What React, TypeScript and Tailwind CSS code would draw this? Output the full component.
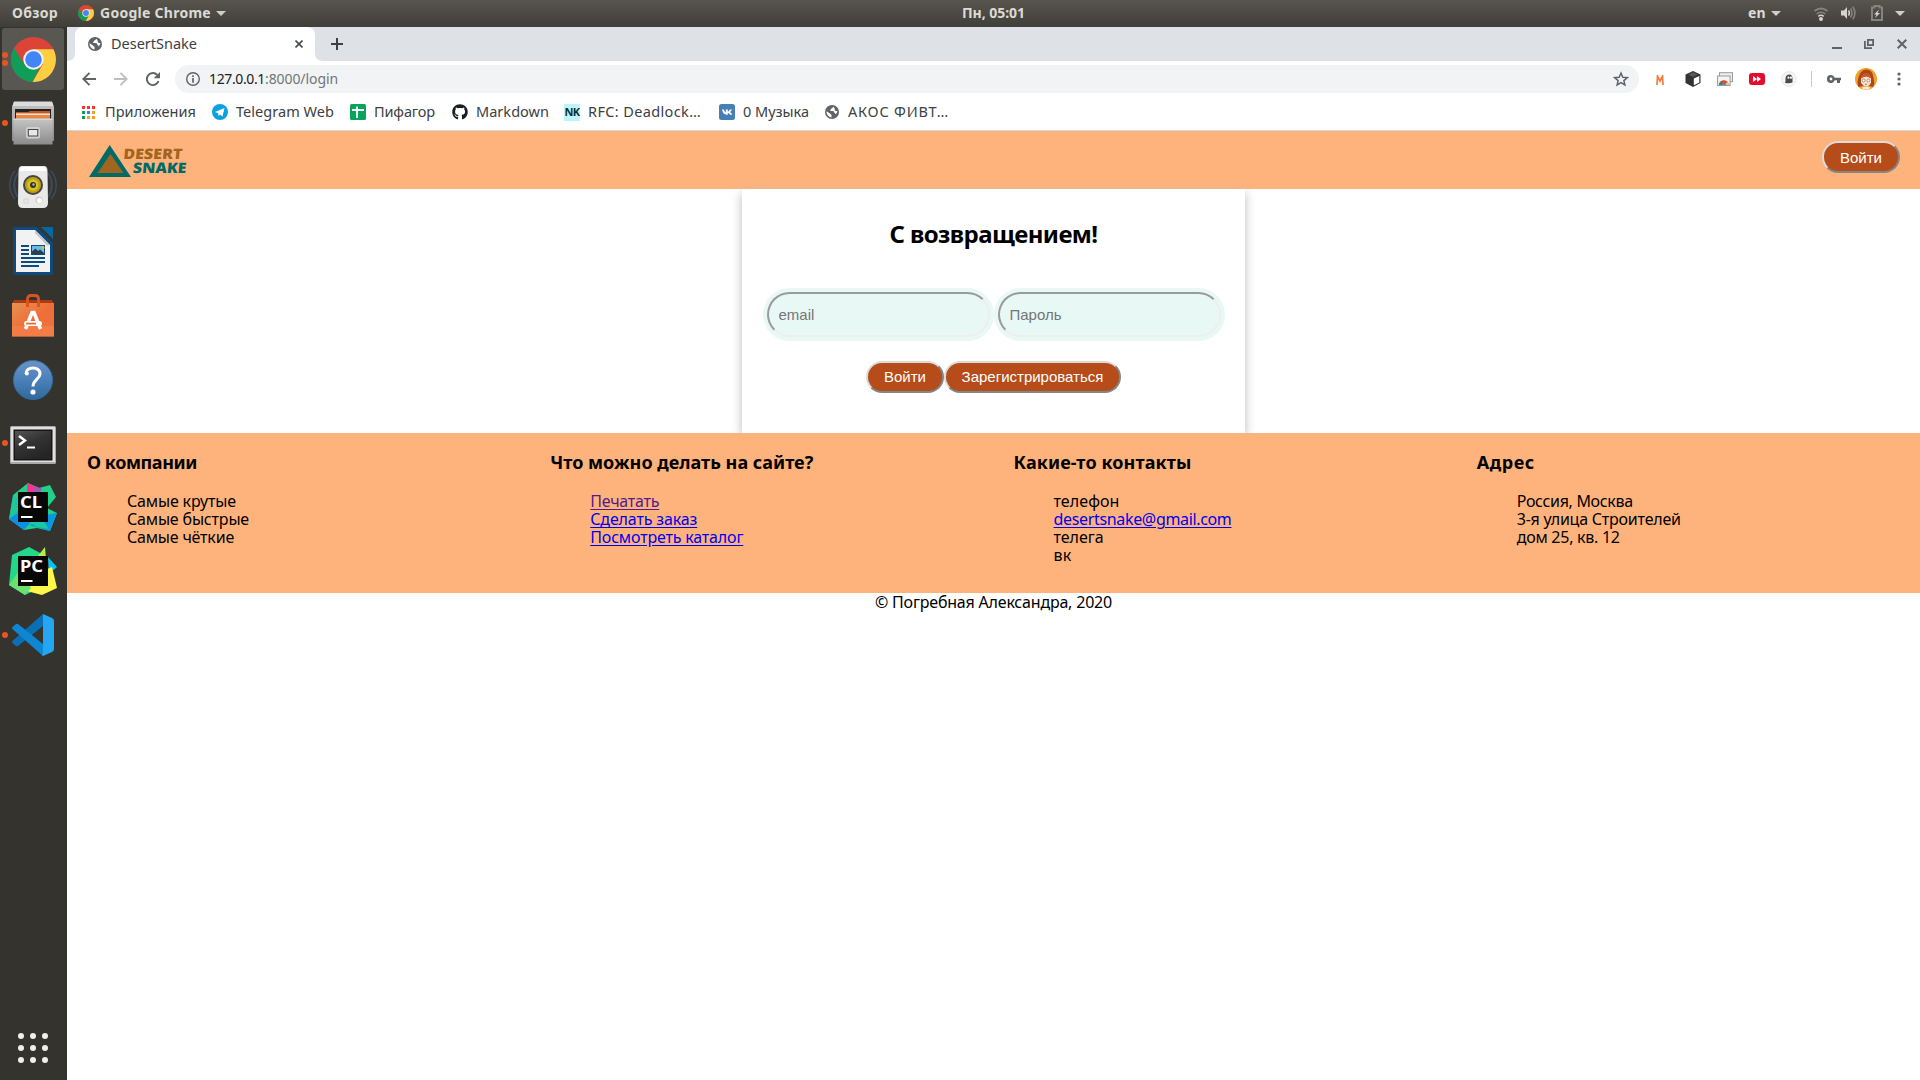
import React, { useLayoutEffect, useRef, useState } from "react";
import { FaGithub } from "react-icons/fa";

/* Text set to an exact measure by distributing letter spacing. */
function Fit({ w, children, className = "" }: { w: number; children: string; className?: string }) {
  const ref = useRef<HTMLSpanElement>(null);
  const [spacing, setSpacing] = useState(0);
  useLayoutEffect(() => {
    if (ref.current) {
      const natural = ref.current.getBoundingClientRect().width;
      setSpacing((w - natural) / children.length);
    }
  }, [w, children]);
  return (
    <span ref={ref} className={`inline-block whitespace-pre ${className}`} style={{ letterSpacing: spacing }}>
      {children}
    </span>
  );
}

function ChromeLogo({ className }: { className: string }) {
  return (
    <svg viewBox="0 0 44 44" className={className}>
      <circle cx="22" cy="22" r="22" fill="#db4437" />
      <path d="M22 12 H41.500 A22 22 0 0 1 21 44 L31 27Z" fill="#ffcd40" />
      <path d="M3 10.800 A22 22 0 0 0 21 44 L28 30 L13 27Z" fill="#0f9d58" />
      <circle cx="22" cy="22" r="10" fill="#f1f1f1" />
      <circle cx="22" cy="22" r="8.100" fill="#4285f4" />
    </svg>
  );
}

function Globe({ className }: { className: string }) {
  return (
    <svg viewBox="0 0 14 14" className={className}>
      <circle cx="7" cy="7" r="7" fill="#5f6368" />
      <path d="M7.8 1.5 C8.5 2.4 7.5 3 6.5 3.2 C6.4 4.3 5.6 4.6 5 5 C5 6 6 6 7.5 6 C9 6 9.3 7 9.3 8 C10.3 8 10.6 8.6 10.4 9.6 A5.6 5.6 0 0 0 12.4 6 C11 6.2 9.7 5.4 9.7 4.4 C9.9 3.3 9.3 2.5 7.8 1.5Z" fill="#fff" />
      <path d="M1.5 6.2 L4.6 8.2 C5.2 9.2 6.4 9 6.5 10 L6.5 12.4 A5.5 5.5 0 0 1 1.5 6.2Z" fill="#fff" />
    </svg>
  );
}

function Files() {
  return (
    <svg viewBox="0 0 42 44" className="h-[44px] w-[42px]">
      <defs>
        <linearGradient id="cab" x1="0" y1="0" x2="0" y2="1"><stop stopColor="#c4c4c4" /><stop offset="1" stopColor="#8b8b8b" /></linearGradient>
      </defs>
      <path d="M2 1 H40 L42 6 V40 H0 V6Z" fill="url(#cab)" />
      <path d="M2 .5 H40 L41.5 5 H.5Z" fill="#dcdcdc" />
      <rect x="3" y="8" width="36" height="10" fill="#222" />
      <path d="M4 11 L16 11 L18 10 H38 V18 H4Z" fill="#c4561b" />
      <rect x="4" y="12.5" width="34" height="1.3" fill="#fff" />
      <rect x="4" y="14" width="34" height="4" fill="#e08a4a" />
      <path d="M1.500 18 H40.500 V43.500 H1.500Z" fill="url(#cab)" />
      <path d="M1.500 17.500 H40.500 V19 H1.500Z" fill="#d8d8d8" />
      <rect x="14" y="26" width="14" height="11.500" rx="2" fill="#d0d0d0" />
      <rect x="16.300" y="28.500" width="9.500" height="6.500" fill="#e8e8e8" stroke="#444" strokeWidth="1" />
    </svg>
  );
}

function Rhythmbox() {
  return (
    <svg viewBox="0 0 48 44" className="h-[44px] w-[48px]">
      <g fill="none" stroke="#3c4c5e">
        <path d="M6 6 C-1 14 -1 26 6 34" strokeWidth="1.500" /><path d="M9 8 C4 15 4 25 9 32" strokeWidth="2" />
        <path d="M42 6 C49 14 49 26 42 34" strokeWidth="1.500" /><path d="M39 8 C44 15 44 25 39 32" strokeWidth="2" />
      </g>
      <path d="M13 1 H35 Q38.500 1 38.500 6 L39 38 Q39 43 34 43 H14 Q9 43 9 38 L9.500 6 Q9.500 1 13 1Z" fill="#e9e9e8" />
      <path d="M14 2 H34 Q37 2 37 6 H11 Q11 2 14 2Z" fill="#fff" />
      <circle cx="24" cy="20" r="10" fill="#41454a" />
      <circle cx="24" cy="20" r="8" fill="#bda310" />
      <circle cx="24" cy="20" r="5.500" fill="#dcc31d" />
      <circle cx="24" cy="20" r="3" fill="#2e3338" />
      <circle cx="24.500" cy="19.500" r="1.200" fill="#a9b0b8" />
      <circle cx="30" cy="35" r="3.600" fill="#cfcfcf" /><circle cx="30.500" cy="35.500" r="2.600" fill="#fafafa" />
      <rect x="15" y="34" width="4" height="4" fill="none" stroke="#d2d2d2" />
    </svg>
  );
}

function Writer() {
  return (
    <svg viewBox="0 0 40 48" className="h-[48px] w-[40px]">
      <path d="M2 0 H24 L40 16 V46 Q40 48 38 48 H2 Q0 48 0 46 V2 Q0 0 2 0Z" fill="#0e4a80" />
      <path d="M28 0 H40 V12Z" fill="#0369a3" />
      <path d="M3 3 H22 L37 18 V45 H3Z" fill="#f2f2f2" />
      <path d="M22 3 L37 18 L34 18.500 L22 6Z" fill="#c6c6c6" />
      <path d="M8 19 H16 M8 23 H16 M8 27 H16 M8 31 H32 M8 35 H32 M8 39 H26" stroke="#0b4d80" strokeWidth="1.800" />
      <rect x="18.500" y="18.500" width="13" height="9" fill="#6db9e8" stroke="#0b4d80" />
      <path d="M19 27 V24.500 L22.500 21.500 L25 24 L27 22.500 L31 26 V27Z" fill="#26404d" /><circle cx="30" cy="20.500" r="1.500" fill="#e5c133" />
    </svg>
  );
}

function Software() {
  return (
    <svg viewBox="0 0 42 44" className="h-[44px] w-[42px]">
      <defs><linearGradient id="bag" x1="0" y1="0" x2="1" y2="1"><stop stopColor="#e79150" /><stop offset=".5" stopColor="#ef6e37" /><stop offset="1" stopColor="#ee713c" /></linearGradient></defs>
      <path d="M2 7 H40 L42 11 H0Z" fill="#a83c12" />
      <path d="M0 10 H42 V43.500 H0Z" fill="url(#bag)" />
      <path d="M0 33 H42 V43.500 H0Z" fill="#f58350" fillOpacity=".6" />
      <path d="M15.500 14 V6 Q15.500 2.500 19 2.500 H23 Q26.500 2.500 26.500 6 V14" fill="none" stroke="#d9531f" strokeWidth="2.800" />
      <path d="M13.500 36 L20 19.500 H22 L28.500 36" fill="none" stroke="#fff" strokeWidth="3.600" />
      <rect x="12" y="28" width="18" height="5" rx="2.500" fill="#fff" /><rect x="14" y="29.700" width="10" height="1.800" fill="#ee6d34" />
    </svg>
  );
}

function Help() {
  return (
    <svg viewBox="0 0 40 40" className="mt-[2px] h-10 w-10">
      <defs><linearGradient id="hlp" x1="0" y1="0" x2="0" y2="1"><stop stopColor="#6a93c6" /><stop offset=".5" stopColor="#4a80b9" /><stop offset="1" stopColor="#2f699c" /></linearGradient></defs>
      <circle cx="20" cy="20" r="19.500" fill="url(#hlp)" stroke="#356fa6" />
      <path d="M13 13.500 C13 6 27.500 6 27 14 C26.500 19.500 20 19.500 20 26.500" fill="none" stroke="#fff" strokeWidth="3" />
      <circle cx="13.800" cy="13.500" r="2" fill="#fff" /><circle cx="20" cy="32" r="2.600" fill="#fff" />
    </svg>
  );
}

function TerminalIcon() {
  return (
    <svg viewBox="0 0 46 38" className="mt-[3px] h-[38px] w-[46px]">
      <defs><linearGradient id="trm" x1="0" y1="0" x2=".6" y2="1"><stop stopColor="#555" /><stop offset=".5" stopColor="#333" /><stop offset="1" stopColor="#252525" /></linearGradient></defs>
      <rect width="46" height="38" rx="1.500" fill="#a9a9a9" /><rect x="1" y="1" width="44" height="35" fill="#e0e0e0" />
      <rect x="3.500" y="3.500" width="39" height="31" fill="#161616" /><rect x="5" y="5" width="36" height="28" fill="url(#trm)" />
      <path d="M9 10 L15 14.500 L9 19" fill="none" stroke="#fff" strokeWidth="2.400" /><path d="M17 21.500 H25" stroke="#fff" strokeWidth="2" />
    </svg>
  );
}

function JetBrains({ label }: { label: "CL" | "PC" }) {
  const cl = label === "CL";
  return (
    <svg viewBox="0 0 48 48" className="h-12 w-12">
      {cl ? (
        <>
          <path d="M4 12 L19 0 L30 5 L41 2 L47 14 L38 25 L48 30 L41 48 L28 45 L15 47 L0 36Z" fill="#21d08a" />
          <path d="M18 0 L33 6 L28 10 H18Z" fill="#fe318c" /><path d="M26 3 L33 6 L30 10 H24Z" fill="#9b5bb5" />
          <path d="M0 36 L9 28 L22 39 L15 47Z" fill="#0b8fe6" /><path d="M4 12 L10 16 V30 L0 36Z" fill="#1fc2a5" fillOpacity=".6" />
          <path d="M36 32 L48 30 L41 48 L20 42 L34 38Z" fill="#0b96e4" />
          <path d="M20 39 H35 L40 46 L28 44Z" fill="#1cc8a0" />
        </>
      ) : (
        <>
          <path d="M3 8 L20 0 L33 7 V40 L16 48 L0 38Z" fill="#21d789" />
          <path d="M28 10 L36 0 L37 12Z" fill="#b5ec50" /><path d="M39 10 L48 20 L40 27Z" fill="#07c3f2" />
          <path d="M38 22 L43 20 L48 41 L33 48 L14 43 V38Z" fill="#fcf84a" />
          <path d="M10 24 L0 38 L16 48 L22 41Z" fill="#6be06f" />
        </>
      )}
      <rect x="9" y="9" width="30" height="30" fill="#070707" />
      <text x="11" y="24.500" textLength={cl ? 22 : 23} lengthAdjust="spacingAndGlyphs" fontSize="16" fontWeight="700" fill="#fff" fontFamily="Noto Sans, sans-serif">{label}</text>
      <rect x="12" y="33" width="11.500" height="2" fill="#fff" />
    </svg>
  );
}

function VSCode() {
  return (
    <svg viewBox="0 0 42 42" className="h-[42px] w-[42px]">
      <path d="M0 28.500 L4 32 Q5 32.500 6 32 L31 12 V0 L1 26.500 Q0 27.500 0 28.500Z" fill="#0a6fb5" />
      <path d="M0 13.500 L4 10 Q5 9.500 6 10 L31 30 V42 L1 15.500 Q0 14.500 0 13.500Z" fill="#0d86d3" />
      <path d="M31 0 L40 4 Q42 5 42 7 V35 Q42 37 40 38 L31 42 Q29.500 42 31 39Z" fill="#24a6f2" />
    </svg>
  );
}

function DockItem({ dots = 0, active = false, children }: { dots?: number; active?: boolean; children: React.ReactNode }) {
  return (
    <div className="relative flex h-16 w-[67px] items-center justify-center pr-px">
      {active && <div className="absolute left-[2px] top-px h-[62px] w-[62px] rounded-[3px] bg-[#595752]" />}
      <div className="absolute left-[2px] top-0 flex h-16 flex-col justify-center gap-[2px]">
        {Array.from({ length: dots }, (_, i) => <div key={i} className="size-[6px] rounded-full bg-[#e95420]" />)}
      </div>
      <div className="relative">{children}</div>
    </div>
  );
}

function Caret() {
  return <svg viewBox="0 0 10 5" className="h-[5px] w-[10px]"><path d="M0 0 H10 L5 5Z" fill="#d0cecb" /></svg>;
}

function TopBar() {
  return (
    <div className="flex h-[27px] w-full items-center bg-linear-to-b from-[#58554d] to-[#403e39] pb-px text-[14px] font-bold leading-[26px] text-[#dcdad5]">
      <div className="w-[66px] shrink-0 pl-[12px]"><Fit w={46}>Обзор</Fit></div>
      <div className="flex w-[896px] shrink-0 items-center pl-[12px]">
        <ChromeLogo className="mr-[6px] size-4" />
        <Fit w={111}>Google Chrome</Fit>
        <div className="ml-[5px] flex"><Caret /></div>
      </div>
      <Fit w={63} className="text-[14px]">Пн, 05:01</Fit>
      <div className="flex flex-1 items-center justify-end pr-[15px]">
        <Fit w={18}>en</Fit>
        <div className="ml-[5px] mr-[32px]"><Caret /></div>
        <svg viewBox="0 0 16 14" className="mt-px h-[14px] w-4" fill="none">
          <path d="M1.500 4 Q8 -1 14.500 4" stroke="#85837e" strokeWidth="2" /><path d="M3.500 7 Q8 3.500 12.500 7" stroke="#85837e" strokeWidth="1.500" />
          <path d="M5.300 9.300 Q8 7.300 10.700 9.300" stroke="#d6d4d0" strokeWidth="1.500" /><circle cx="8" cy="12" r="2" fill="#d6d4d0" />
        </svg>
        <svg viewBox="0 0 16 14" className="ml-[12px] h-[14px] w-4" fill="none">
          <path d="M0 4.500 H3 L6 1 V13 L3 9.500 H0Z" fill="#d6d4d0" /><path d="M7.500 4.500 Q9.300 7 7.500 9.500" stroke="#d6d4d0" strokeWidth="1.500" />
          <path d="M9.500 2.500 Q12.500 7 9.500 11.500 M11.800 .8 Q16 7 11.800 13.200" stroke="#85837e" strokeWidth="1.600" />
        </svg>
        <svg viewBox="0 0 12 16" className="ml-[14px] h-4 w-3" fill="none">
          <path d="M3.500 2.500 V1 H8.500 V2.500 H11 V15 H1 V2.500Z" stroke="#85837e" strokeWidth="2" /><path d="M8 4.500 L3 9.500 H5.500 L4 13 L9 8 H6.500Z" fill="#d6d4d0" />
        </svg>
        <div className="ml-[12px]"><Caret /></div>
      </div>
    </div>
  );
}

function Bookmark({ icon, label, w, gap }: { icon: React.ReactNode; label: string; w: number; gap: string }) {
  return <div className={`flex items-center ${gap}`}><div className="mr-2 flex w-4 justify-center">{icon}</div><Fit w={w}>{label}</Fit></div>;
}

function Browser() {
  return (
    <>
      <div className="flex h-[34px] items-end bg-[#dee1e6]">
        <svg viewBox="0 0 8 8" className="size-2"><path d="M8 0 V8 H0 Q8 8 8 0" fill="#fff" /></svg>
        <div className="flex h-[34px] w-[240px] items-center rounded-t-lg bg-white pl-[13px] pr-[12px]">
          <Globe className="size-[14px]" />
          <Fit w={86} className="ml-[9px] pb-[2px] text-[14.500px] leading-[32px] text-[#3c4043]">DesertSnake</Fit>
          <svg viewBox="0 0 8 8" className="ml-auto size-2"><path d="M.5 .5 L7.500 7.500 M7.500 .5 L.5 7.500" stroke="#45494d" strokeWidth="1.600" /></svg>
        </div>
        <svg viewBox="0 0 8 8" className="size-2"><path d="M0 0 V8 H8 Q0 8 0 0" fill="#fff" /></svg>
        <svg viewBox="0 0 12 12" className="mb-[11px] ml-2 size-3"><path d="M0 6 H12 M6 0 V12" stroke="#3c4043" strokeWidth="2" /></svg>
        <div className="ml-auto mr-[13px] flex h-[34px] items-center">
          <div className="mr-[22px] mt-[8px] h-[2px] w-[10px] bg-[#5f6368]" />
          <svg viewBox="0 0 10 10" className="mr-[23px] size-[10px]" fill="none" stroke="#5f6368" strokeWidth="1.800"><rect x="3.900" y=".9" width="5.200" height="5.200" /><path d="M.9 2 V9.100 H8" /></svg>
          <svg viewBox="0 0 10 10" className="size-[10px]"><path d="M.7 .7 L9.300 9.300 M9.300 .7 L.7 9.300" stroke="#5f6368" strokeWidth="2" /></svg>
        </div>
      </div>

      <div className="flex h-9 items-center bg-white pl-[15px]">
        <svg viewBox="0 0 14 14" className="size-[14px]" fill="none" stroke="#5f6368" strokeWidth="1.900"><path d="M14 7 H1.500 M7.500 .8 L1.300 7 L7.500 13.200" /></svg>
        <svg viewBox="0 0 14 14" className="ml-[18px] size-[14px]" fill="none" stroke="#bcbec1" strokeWidth="1.900"><path d="M0 7 H12.500 M6.500 .8 L12.700 7 L6.500 13.200" /></svg>
        <svg viewBox="0 0 14 14" className="ml-[18px] size-[14px]"><path d="M12.500 9.200 A6 6 0 1 1 11.300 3" fill="none" stroke="#5f6368" strokeWidth="1.900" /><path d="M14 0 V6.300 H7.700Z" fill="#5f6368" /></svg>
        <div className="ml-[15px] flex h-7 w-[1464px] items-center rounded-full bg-[#f1f3f4] pl-[11px] pr-[10px]">
          <svg viewBox="0 0 14 14" className="size-[14px]"><circle cx="7" cy="7" r="6.300" fill="none" stroke="#5f6368" strokeWidth="1.400" /><path d="M7 6 V10.800 M7 3.200 V4.900" stroke="#5f6368" strokeWidth="1.700" /></svg>
          <div className="ml-[9px] flex text-[14px] leading-7"><Fit w={56} className="text-[#202124]">127.0.0.1</Fit><Fit w={73} className="text-[#72767a]">:8000/login</Fit></div>
          <svg viewBox="0 0 24 24" className="ml-auto size-[16px]"><path d="M12 3 L14.700 9.300 L21.500 9.900 L16.300 14.400 L17.900 21 L12 17.500 L6.100 21 L7.700 14.400 L2.500 9.900 L9.300 9.300Z" fill="none" stroke="#5f6368" strokeWidth="2.200" /></svg>
        </div>
        <div className="flex flex-1 items-center">
          <svg viewBox="0 0 8 10" className="ml-[17px] mt-[2px] h-[10px] w-2"><path d="M1 10 L1.500 1 L4 6 L6.500 1 L7 10" fill="none" stroke="#f47b3c" strokeWidth="1.700" /></svg>
          <svg viewBox="0 0 16 16" className="ml-[21px] size-4"><path d="M8 0 L15.500 3.500 V12 L8 16 L.5 12 V3.500Z" fill="#333" /><path d="M8.800 7.500 L14.300 5 V11.500 L8.800 14.300Z" fill="#fff" /><path d="M8 1.200 L12.800 3.600 L8 5.900 L3.200 3.600Z" fill="#5a5a5a" /></svg>
          <svg viewBox="0 0 16 14" className="ml-4 h-[14px] w-4"><rect x="2.500" y=".7" width="13" height="9" fill="#eee" stroke="#999" /><rect x=".6" y="4" width="12.500" height="9.500" fill="#f4f4f4" stroke="#999" /><path d="M2 13 A4.800 4.800 0 0 1 11.600 13Z" fill="#db4437" /><path d="M2 13 Q2 11 3.500 9.800 L6 13Z" fill="#0f9d58" /><path d="M11.600 13 Q11.600 11 10 9.800 L8 13Z" fill="#ffcd40" /><path d="M4.800 13 A2 2 0 0 1 8.800 13Z" fill="#4285f4" /></svg>
          <svg viewBox="0 0 16 12" className="ml-4 h-3 w-4"><rect width="16" height="12" rx="3" fill="#e30c2c" /><path d="M4 3 L8 6 L4 9Z M8 3 L12 6 L8 9Z" fill="#fff" /></svg>
          <svg viewBox="0 0 16 16" className="ml-4 size-4"><circle cx="8" cy="8" r="7.300" fill="#f6f6f6" stroke="#e8e8e8" /><path d="M4 12 Q4.800 10.500 4.500 7 Q5 3.500 8.500 3.500 Q11.500 3.700 11.500 8 V11.500 Q9 12.500 4 12Z" fill="#4a4d50" /><circle cx="7.500" cy="6.700" r="1.100" fill="#fff" /><circle cx="10" cy="6.700" r="1.100" fill="#fff" /></svg>
          <div className="ml-[14px] h-4 w-px bg-[#c6c8ca]" />
          <svg viewBox="0 0 14 8" className="ml-[15px] h-2 w-[14px]"><path d="M4 0 A4 4 0 1 0 7.700 5.300 H10 V8 H13 V5.300 H14 V2.700 H7.700 A4 4 0 0 0 4 0Z M4 2.600 A1.400 1.400 0 1 1 4 5.400 A1.400 1.400 0 0 1 4 2.600Z" fill="#5f6368" fillRule="evenodd" /></svg>
          <svg viewBox="0 0 22 22" className="ml-[14px] size-[22px]">
            <circle cx="11" cy="11" r="11" fill="#f2a128" /><path d="M3.500 19 Q1.500 14 4 8 Q6 1 12 1.500 Q18 2 18.500 10 Q20 15 18 19 L11 17Z" fill="#a9471c" />
            <path d="M6 10 Q11 7 16 10 V14.500 Q14.500 18.500 11 18.500 Q7.500 18 6 14.500Z" fill="#f7e0cc" /><path d="M5.500 11 Q6.500 5 11 5 Q16 5 16.500 11 L11 7.500Z" fill="#c9591f" />
            <circle cx="8.600" cy="12.500" r="1.400" fill="#fff" stroke="#7a5b4c" strokeWidth=".6" /><circle cx="13.400" cy="12.500" r="1.400" fill="#fff" stroke="#7a5b4c" strokeWidth=".6" /><path d="M10 16.300 H12" stroke="#b4432a" strokeWidth=".7" /><path d="M7 19.500 Q11 18 15 19.500 L14 21.500 H8Z" fill="#f3efdf" />
          </svg>
          <svg viewBox="0 0 4 14" className="ml-[20px] h-[14px] w-1" fill="#5f6368"><circle cx="2" cy="2" r="1.600" /><circle cx="2" cy="7" r="1.600" /><circle cx="2" cy="12" r="1.600" /></svg>
        </div>
      </div>

      <div className="flex h-[34px] items-center border-b border-[#d5d7da] bg-white pb-[3px] pl-[14px] text-[14.500px] text-[#3c4043]">
        <Bookmark gap="" w={91} label="Приложения" icon={
          <div className="mr-[1px] grid grid-cols-3 gap-[2px]">
            <i className="size-[3px] bg-[#f33]" /><i className="size-[3px] bg-[#f33]" /><i className="size-[3px] bg-[#f33]" />
            <i className="size-[3px] bg-[#0a9d58]" /><i className="size-[3px] bg-[#1a8cf0]" /><i className="size-[3px] bg-[#fb9c28]" />
            <i className="size-[3px] bg-[#0a9d58]" /><i className="size-[3px] bg-[#fb9c28]" /><i className="size-[3px] bg-[#fb9c28]" />
          </div>} />
        <Bookmark gap="ml-[16px]" w={98} label="Telegram Web" icon={<svg viewBox="0 0 16 16" className="size-4"><circle cx="8" cy="8" r="8" fill="#0aa1e0" /><path d="M3 8 L12.500 4 L10.500 12.500 L8 10.500 L6.500 12 L6.200 9.300Z" fill="#fff" /></svg>} />
        <Bookmark gap="ml-[16px]" w={61} label="Пифагор" icon={<svg viewBox="0 0 16 16" className="size-4"><rect width="16" height="16" rx="1.500" fill="#0aa35c" /><path d="M2 6 H14 M7 2.500 V14" stroke="#fff" strokeWidth="1.800" /></svg>} />
        <Bookmark gap="ml-[17px]" w={73} label="Markdown" icon={<FaGithub className="size-4 text-[#1b1f23]" />} />
        <Bookmark gap="ml-[15px]" w={113} label="RFC: Deadlock…" icon={<div className="flex h-[17px] w-4 shrink-0 items-center justify-center bg-[#bdf5fa] text-[11px] font-bold tracking-[-0.5px] text-[#0c3034]">NK</div>} />
        <Bookmark gap="ml-[18px]" w={66} label="0 Музыка" icon={<svg viewBox="0 0 16 16" className="size-4"><rect width="16" height="16" rx="2.500" fill="#4680b5" /><path d="M3 5.500 H5 Q5.500 7.800 6.800 8.500 V5.500 H8.800 V7.800 Q10 7.300 11 5.500 H13 Q12.300 7 11 8.100 Q12.500 9 13.200 10.700 H11.200 Q10.300 9.300 8.800 9 V10.700 H8 Q4 10.700 3 5.500Z" fill="#fff" /></svg>} />
        <Bookmark gap="ml-[15px]" w={101} label="АКОС ФИВТ…" icon={<Globe className="size-[14px]" />} />
      </div>
    </>
  );
}

function PillButton({ children, className }: { children: string; className: string }) {
  return <button className={`h-8 rounded-2xl border-2 border-t-[#dcdcdc] border-l-[#dcdcdc] border-r-[#858585] border-b-[#858585] bg-[#b54c19] text-center font-['Liberation_Sans',Arial,sans-serif] text-[15px] leading-[28px] text-white ${className}`}>{children}</button>;
}

function Field({ placeholder, type }: { placeholder: string; type: string }) {
  return <input type={type} placeholder={placeholder} className="h-[45px] w-[223px] rounded-[25px] border-2 border-t-[#9a9a9a] border-l-[#9a9a9a] border-r-[#eeeeee] border-b-[#eeeeee] bg-[#e8f8f5] px-[10px] font-['Liberation_Sans',Arial,sans-serif] text-[15px] shadow-[0_0_0_4px_#e8f8f5] outline-none placeholder:text-[#757575]" />;
}

type Line = { t: string; w: number; c?: string };

function Column({ title, w, lines }: { title: string; w: number; lines: Line[] }) {
  return (
    <div className="flex-1 pl-5">
      <h3 className="mb-[19px] mt-[18px] h-[22px] text-[18px] font-bold leading-[22px]"><Fit w={w}>{title}</Fit></h3>
      <ul className="pl-10 text-[16px]">
        {lines.map((l) => <li key={l.t} className="h-[18px] leading-[18px]"><Fit w={l.w} className={l.c}>{l.t}</Fit></li>)}
      </ul>
    </div>
  );
}

const link = "text-[#0000ee] underline underline-offset-2";

export default function App() {
  return (
    <div className="flex h-[1080px] w-[1920px] flex-col overflow-hidden bg-white font-['Noto_Sans','Open_Sans',sans-serif] text-black">
      <TopBar />
      <div className="flex min-h-0 flex-1">
        <nav className="flex w-[67px] shrink-0 flex-col bg-[#35332e]">
          <DockItem active dots={2}><ChromeLogo className="size-[45px]" /></DockItem>
          <DockItem dots={1}><Files /></DockItem>
          <DockItem><Rhythmbox /></DockItem>
          <DockItem><Writer /></DockItem>
          <DockItem><Software /></DockItem>
          <DockItem><Help /></DockItem>
          <DockItem dots={1}><TerminalIcon /></DockItem>
          <DockItem><JetBrains label="CL" /></DockItem>
          <DockItem><JetBrains label="PC" /></DockItem>
          <DockItem dots={1}><VSCode /></DockItem>
          <div className="mb-[17px] ml-[18px] mt-auto grid w-[30px] grid-cols-3 gap-[6px]">
            {Array.from({ length: 9 }, (_, i) => <div key={i} className="size-[6px] rounded-full bg-[#f0efec]" />)}
          </div>
        </nav>
        <div className="flex min-w-0 flex-1 flex-col">
          <Browser />
          <header className="flex h-[58px] shrink-0 items-start justify-between bg-[#ffb37c] pl-[22px] pr-5 pt-[10px]">
            <svg viewBox="0 0 100 36" className="mt-[4px] h-[36px] w-[100px]">
              <path d="M20.700 0 L42 32 H0Z" fill="#006a67" /><path d="M21.500 9 L34.500 28 H8.500Z" fill="#a0651f" />
              <text transform="translate(34 14) skewX(-5)" textLength="59" lengthAdjust="spacingAndGlyphs" fontSize="14.500" fontWeight="900" fill="#a0651f" fontFamily="Noto Sans, sans-serif">DESERT</text>
              <text transform="translate(43.500 28) skewX(-5)" textLength="53.500" lengthAdjust="spacingAndGlyphs" fontSize="14.500" fontWeight="900" fill="#006a67" fontFamily="Noto Sans, sans-serif">SNAKE</text>
            </svg>
            <PillButton className="w-[78px] pt-px">Войти</PillButton>
          </header>
          <main className="flex h-[244px] shrink-0 justify-center">
            <form className="flex h-[244px] w-[503px] flex-col items-center bg-white shadow-[0_4px_10px_#bbb]">
              <h2 className="mt-[28px] h-[34px] text-[24px] font-bold leading-[34px]"><Fit w={208}>С возвращением!</Fit></h2>
              <div className="mt-[41px] flex gap-2"><Field type="email" placeholder="email" /><Field type="password" placeholder="Пароль" /></div>
              <div className="mt-[24px] flex"><PillButton className="w-[78px]">Войти</PillButton><PillButton className="w-[177px]">Зарегистрироваться</PillButton></div>
            </form>
          </main>
          <footer className="relative flex h-[160px] shrink-0 bg-[#ffb37c]">
            <Column title="О компании" w={110} lines={[{ t: "Самые крутые", w: 109 }, { t: "Самые быстрые", w: 122 }, { t: "Самые чёткие", w: 107 }]} />
            <Column title="Что можно делать на сайте?" w={263} lines={[{ t: "Печатать", w: 69, c: "text-[#551a8b] underline underline-offset-2" }, { t: "Сделать заказ", w: 107, c: link }, { t: "Посмотреть каталог", w: 153, c: link }]} />
            <Column title="Какие-то контакты" w={178} lines={[{ t: "телефон", w: 66 }, { t: "desertsnake@gmail.com", w: 178, c: link }, { t: "телега", w: 50 }, { t: "вк", w: 18 }]} />
            <Column title="Адрес" w={58} lines={[{ t: "Россия, Москва", w: 116 }, { t: "3-я улица Строителей", w: 164 }, { t: "дом 25, кв. 12", w: 103 }]} />
          </footer>
          <p className="h-[18px] text-center text-[16px] leading-[18px]"><Fit w={237}>© Погребная Александра, 2020</Fit></p>
        </div>
      </div>
    </div>
  );
}
